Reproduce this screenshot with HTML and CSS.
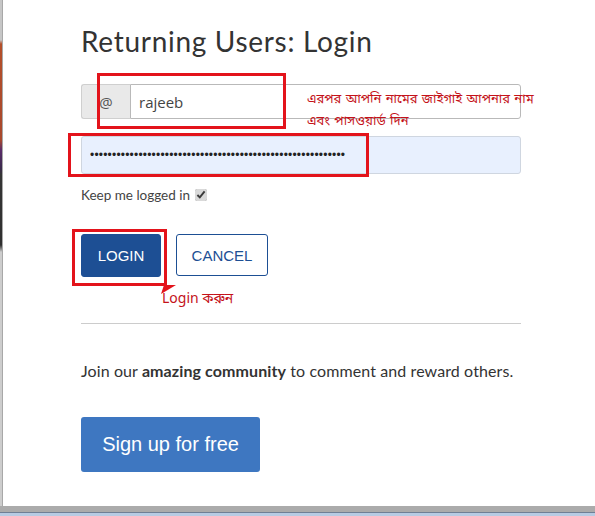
FILE: index.html
```html
<!DOCTYPE html>
<html lang="en">
<head>
<meta charset="utf-8">
<title>Returning Users: Login</title>
<link rel="stylesheet" href="styles.css">
</head>
<body>
<div class="screen">
  <div class="edge"></div>
  <div class="modal">
    <div class="content">
      <h1 class="title">Returning Users: Login</h1>
      <div class="input-group">
        <span class="addon">@</span>
        <input class="text-input" type="text" value="rajeeb">
      </div>
      <input class="password" type="password" value="rajeebrajeebrajeebrajeebrajeebrajeebrajeebrajeebrajeebraje">
      <label class="remember">Keep me logged in <input class="check" type="checkbox" checked></label>
      <div class="buttons">
        <button class="btn btn-login">LOGIN</button>
        <button class="btn btn-cancel">CANCEL</button>
      </div>
      <hr class="divider">
      <p class="join">Join our <strong>amazing community</strong> to comment and reward others.</p>
      <button class="btn-signup">Sign up for free</button>

      <div class="mark mark-user"></div>
      <div class="mark mark-pass"></div>
      <div class="mark mark-login"></div>
      <svg class="tail" width="20" height="12" viewBox="0 0 20 12"><polygon points="4,0 16,0 1,9" fill="#e3131b"/></svg>
      <p class="note note-form">এরপর আপনি নামের জাইগাই আপনার নাম<br>এবং পাসওয়ার্ড দিন</p>
      <p class="note note-login">Login করুন</p>
    </div>
  </div>
</div>
<div class="taskbar"></div>
<div class="taskbar-blue"></div>
</body>
</html>
```

FILE: styles.css
```css
html, body {
  margin: 0;
  padding: 0;
}
body {
  width: 595px;
  height: 516px;
  overflow: hidden;
  display: flex;
  flex-direction: column;
  background: #fff;
  font-family: Lato, "Liberation Sans", sans-serif;
}
.screen {
  flex: 1;
  display: flex;
  min-height: 0;
}
.edge {
  width: 2px;
  border-right: 1px solid #a8a8a8;
  background: linear-gradient(to bottom, #c6c6c6 0, #c6c6c6 40px, #b44f2a 44px, #a8482c 140px, #5a2c6a 150px, #3b2a4d 168px, #353535 175px, #2f2f2f 245px, #cdcdcd 252px, #cdcdcd 100%);
}
.modal {
  flex: 1;
  background: #fff;
  padding-left: 78px;
}
.content {
  position: relative;
  width: 440px;
  padding-top: 24px;
}
.title {
  margin: 0 0 26px;
  font-family: Lato, sans-serif;
  font-weight: 400;
  font-size: 28px;
  line-height: 34px;
  color: #333;
  letter-spacing: 0.7px;
}
.input-group {
  display: flex;
  height: 35px;
  box-sizing: border-box;
}
.addon {
  width: 49px;
  box-sizing: border-box;
  display: flex;
  align-items: center;
  justify-content: center;
  background: #e9e9e9;
  border: 1px solid #cfcfcf;
  border-right: none;
  border-radius: 3px 0 0 3px;
  color: #555;
  font-family: "Open Sans", sans-serif;
  font-size: 15px;
}
.text-input {
  flex: 1;
  margin: 0;
  box-sizing: border-box;
  height: 35px;
  border: 1px solid #b9b9b9;
  border-radius: 0 3px 3px 0;
  padding: 0 8px;
  font-family: "Open Sans", sans-serif;
  font-size: 15px;
  color: #444;
  background: #fff;
  outline: none;
}
.password {
  display: block;
  width: 440px;
  height: 38px;
  box-sizing: border-box;
  margin: 17px 0 0;
  padding: 0 8px;
  border: 1px solid #cfd6e0;
  border-radius: 3px;
  background: #e8f0fe;
  font-family: "Liberation Sans", Arial, sans-serif;
  font-size: 12px;
  color: #222;
  letter-spacing: 0.2px;
  outline: none;
}
.remember {
  display: flex;
  align-items: center;
  margin-top: 12px;
  height: 18px;
  font-family: Lato, sans-serif;
  font-size: 13.5px;
  color: #444;
}
.check {
  margin: 0 0 0 5px;
  width: 12px;
  height: 12px;
  accent-color: #d9d9d9;
  filter: grayscale(1);
}
.buttons {
  display: flex;
  gap: 15px;
  margin-top: 30px;
}
.btn {
  height: 43px;
  box-sizing: border-box;
  border-radius: 3px;
  font-family: "Liberation Sans", Arial, sans-serif;
  font-size: 15px;
  padding: 0;
  margin: 0;
}
.btn-login {
  width: 80px;
  background: #1d4f94;
  border: 1px solid #1d4f94;
  color: #fff;
}
.btn-cancel {
  width: 92px;
  height: 42px;
  background: #fff;
  border: 1px solid #1d4f94;
  color: #1d4f94;
}
.divider {
  margin: 46px 0 0;
  border: none;
  border-top: 1px solid #cccccc;
  height: 0;
}
.join {
  margin: 36px 0 0;
  font-family: Lato, sans-serif;
  font-size: 16px;
  line-height: 22px;
  color: #333;
  letter-spacing: 0.1px;
}
.join strong {
  font-weight: 700;
}
.btn-signup {
  display: block;
  margin-top: 35px;
  width: 179px;
  height: 55px;
  border: none;
  border-radius: 3px;
  background: #3e77c1;
  color: #fff;
  font-family: "Liberation Sans", Arial, sans-serif;
  font-size: 20px;
  padding: 0;
}
.mark {
  position: absolute;
  box-sizing: border-box;
  border: 3px solid #e3131b;
}
.mark-user {
  left: 16px;
  top: 73px;
  width: 189px;
  height: 56px;
}
.mark-pass {
  left: -13px;
  top: 133px;
  width: 301px;
  height: 44px;
}
.mark-login {
  left: -9px;
  top: 229px;
  width: 95px;
  height: 57px;
}
.tail {
  position: absolute;
  left: 79px;
  top: 285px;
}
.note {
  position: absolute;
  margin: 0;
  color: #c4121a;
  font-family: "Noto Sans Bengali", "Noto Serif Bengali", "Lohit Bengali", "FreeSans", "Noto Sans", sans-serif;
  font-size: 13px;
  line-height: 22px;
  white-space: nowrap;
}
.note-form {
  left: 226px;
  top: 89px;
  word-spacing: 1px;
}
.note-login {
  left: 81px;
  top: 289px;
  font-size: 14px;
}
.taskbar {
  height: 6px;
  background: #ababab;
}
.taskbar-blue {
  height: 4px;
  border-top: 1px solid #6f7f95;
  background: #b7cbe3;
  box-sizing: border-box;
}
```
